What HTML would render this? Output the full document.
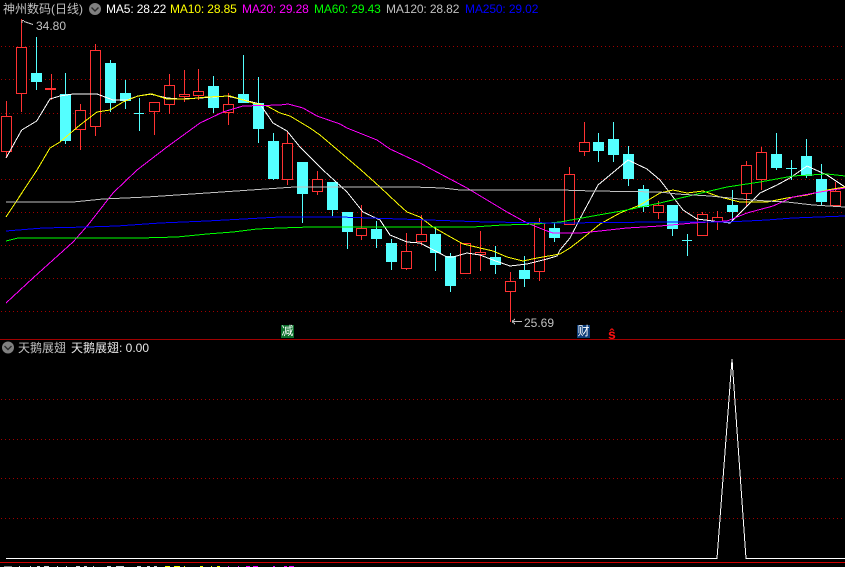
<!DOCTYPE html>
<html><head><meta charset="utf-8"><style>
html,body{margin:0;padding:0;background:#000}
#r{position:relative;width:845px;height:567px;overflow:hidden;background:#000;font:12px/14px "Liberation Sans","WenQuanYi Zen Hei","Noto Sans CJK SC",sans-serif}
#r svg{position:absolute;left:0;top:0}
.t{position:absolute;white-space:pre;color:#c0c0c0}
.b{position:absolute;width:13px;height:13px;line-height:13px;text-align:center;color:#fff;font-size:12px}
</style></head><body><div id="r">
<svg width="845" height="567" viewBox="0 0 845 567" shape-rendering="crispEdges" fill="none">
<path stroke="#a00000" stroke-dasharray="1 3" d="M1 46.5H845M1 79.5H845M1 113.5H845M1 146.5H845M1 179.5H845M1 212.5H845M1 245.5H845M1 278.5H845M1 311.5H845M1 399.5H845M1 439.5H845M1 478.5H845M1 518.5H845"/>
<path stroke="#54ffff" d="M36.5 37V90M65.5 73V144M110.5 60V112M125.5 80V109M213.5 76V113M243.5 55V103M258.5 77V143M273.5 133V180M302.5 162V223M332.5 182V216M347.5 212V249M376.5 221V248M391.5 239V270M435.5 227V271M450.5 253V292M495.5 246V274M524.5 256V287M554.5 223V242M598.5 133V162M613.5 122V162M628.5 146V186M643.5 185V212M672.5 205V236M732.5 190V220M776.5 133V170M806.5 139V178M821.5 164V206M139.5 98V131M134 113.5H144M687.5 234V256M682 240.5H692M791.5 160V180M786 168.5H797"/>
<g fill="#54ffff">
<rect x="31" y="73" width="11" height="9"/><rect x="60" y="94" width="11" height="47"/><rect x="105" y="63" width="11" height="40"/><rect x="120" y="93" width="11" height="8"/><rect x="208" y="86" width="11" height="22"/><rect x="238" y="94" width="11" height="9"/><rect x="253" y="103" width="11" height="26"/><rect x="268" y="141" width="11" height="38"/><rect x="297" y="162" width="11" height="32"/><rect x="327" y="182" width="11" height="28"/><rect x="342" y="212" width="11" height="20"/><rect x="371" y="229" width="11" height="10"/><rect x="386" y="243" width="11" height="19"/><rect x="430" y="234" width="11" height="19"/><rect x="445" y="256" width="11" height="30"/><rect x="490" y="257" width="11" height="8"/><rect x="519" y="270" width="11" height="9"/><rect x="549" y="228" width="11" height="10"/><rect x="593" y="142" width="11" height="9"/><rect x="608" y="139" width="11" height="16"/><rect x="623" y="154" width="11" height="25"/><rect x="638" y="189" width="11" height="18"/><rect x="667" y="205" width="11" height="24"/><rect x="727" y="205" width="11" height="7"/><rect x="771" y="154" width="11" height="14"/><rect x="801" y="156" width="11" height="20"/><rect x="816" y="179" width="11" height="23"/>
</g>
<path stroke="#ff3232" d="M6.5 101V158M21.5 19V112M51.5 74V100M80.5 104V150M95.5 44V136M154.5 102V135M169.5 74V114M184.5 70V102M198.5 69V100M228.5 93V125M287.5 132V185M317.5 171V195M361.5 205V240M406.5 233V270M421.5 215V245M465.5 243V274M480.5 231V271M510.5 272V322M539.5 218V281M569.5 167V225M584.5 122V156M658.5 201V219M702.5 212V236M717.5 211V230M746.5 161V206M761.5 147V190M835.5 182V206"/>
<rect x="45" y="88" width="11" height="2" fill="#ff3232"/>
<g fill="#000" stroke="#ff3232">
<rect x="1.5" y="116.5" width="10" height="35"/><rect x="16.5" y="47.5" width="10" height="46"/><rect x="75.5" y="110.5" width="10" height="19"/><rect x="90.5" y="50.5" width="10" height="76"/><rect x="149.5" y="102.5" width="10" height="9"/><rect x="164.5" y="85.5" width="10" height="19"/><rect x="179.5" y="94.5" width="10" height="2"/><rect x="193.5" y="91.5" width="10" height="4"/><rect x="223.5" y="104.5" width="10" height="8"/><rect x="282.5" y="143.5" width="10" height="36"/><rect x="312.5" y="179.5" width="10" height="12"/><rect x="356.5" y="228.5" width="10" height="7"/><rect x="401.5" y="251.5" width="10" height="17"/><rect x="416.5" y="234.5" width="10" height="7"/><rect x="460.5" y="243.5" width="10" height="30"/><rect x="475.5" y="252.5" width="10" height="2"/><rect x="505.5" y="281.5" width="10" height="10"/><rect x="534.5" y="223.5" width="10" height="48"/><rect x="564.5" y="174.5" width="10" height="50"/><rect x="579.5" y="142.5" width="10" height="9"/><rect x="653.5" y="205.5" width="10" height="7"/><rect x="697.5" y="214.5" width="10" height="21"/><rect x="712.5" y="217.5" width="10" height="4"/><rect x="741.5" y="165.5" width="10" height="28"/><rect x="756.5" y="152.5" width="10" height="27"/><rect x="830.5" y="191.5" width="10" height="14"/>
</g>
<polyline stroke="#fff" points="6,158 21.7,130 36.7,121 50,99 60,96 73,94 97,94 113,100 127,100 138,96 150,94 167,98 180,99 200,98 227,96 240,99 260,104 273,123 280,127 287,131 300,147 323,170 347,192 363,212 380,220 390,235 407,242 420,243 447,257 453,257 467,253 480,255 493,260 510,266 527,264 547,259 557,256 560,250 570,238 583,213 598,185 610,175 628,160 647,169 660,180 683,210 697,219 713,221 730,223 740,213 760,193 777,185 790,178 807,166 827,175 845,187"/>
<polyline stroke="#ffff00" points="6,217 37,170 50,148 60,142 80,125 97,112 110,110 123,102 138,96 152,94 167,99 187,99 207,97 230,96 253,103 267,106 280,113 290,116 310,128 320,135 340,152 361,170 380,187 397,203 407,212 420,217 433,227 447,235 463,244 480,248 493,251 507,257 523,261 537,258 560,254 570,248 583,238 600,224 620,213 640,205 660,193 673,190 687,193 703,191 720,197 740,202 767,202 787,198 807,195 827,190 845,187"/>
<polyline stroke="#ff00ff" points="6,303 33,278 53,260 73,242 88,225 113,193 137,170 167,147 200,123 223,112 243,106 280,105 288,104 303,108 317,116 340,124 347,128 377,140 390,149 420,163 433,170 467,188 507,212 527,223 547,231 553,233 580,233 600,231 627,228 660,226 693,223 727,221 747,213 773,206 793,197 820,192 845,188"/>
<polyline stroke="#00ff00" points="6,241 18,238 87,238 133,238 140,238 177,237 207,234 233,232 257,229 280,228 310,227 327,227 413,227 433,227 443,227 473,227 503,225 537,224 560,222 593,216 627,210 660,203 693,195 727,187 760,182 793,176 827,174 845,176"/>
<polyline stroke="#c0c0c0" points="6,202 43,202 73,202 103,199 147,197 207,193 280,188 295,187 413,187 443,188 460,190 560,190 593,191 660,192 677,194 710,196 740,199 767,201 787,202 813,205 845,207"/>
<polyline stroke="#0000ff" points="6,231 43,228 87,227 117,226 160,223 207,221 280,217 340,217 400,219 457,221 487,222 560,223 660,222 727,222 767,220 793,218 845,216"/>
<path stroke="#c0c0c0" d="M22 20.5H24M22 20.5V23M24 21.5L33 24.5"/>
<path stroke="#c0c0c0" d="M512 321.5H522M512 321.5L515 319M512 321.5L515 324"/>
<rect x="0" y="339" width="845" height="1" fill="#a00000"/>
<polyline stroke="#fff" stroke-width="1" points="6,558.5 717,558.5 732,359 746,558.5 845,558.5"/>
<rect x="0" y="562" width="845" height="1" fill="#d00000"/>
<path stroke="#d8d8d8" d="M19 566.5h1M30 566.5h1M37 566.5h3M44 566.5h5M57 566.5h1M66 566.5h1M76 566.5h4M84 566.5h3M93 566.5h1M107 566.5h4M116 566.5h8M137 566.5h4M147 566.5h3M154 566.5h3"/>
<path stroke="#808080" d="M4 566.5h8"/>
<path stroke="#ffff00" d="M165 566.5h5M174 566.5h6M184 566.5h1M200 566.5h3M211 566.5h1M217 566.5h3"/>
<path stroke="#ff00ff" d="M228 566.5h1M238 566.5h1M246 566.5h4M253 566.5h5M273 566.5h2M284 566.5h3M289 566.5h5"/>
</svg>
<svg width="845" height="567" viewBox="0 0 845 567" fill="none">
<circle cx="95" cy="9" r="6" fill="#808080"/><path d="M91.5 7.5L95 11L98.5 7.5" stroke="#2a2a2a" stroke-width="1.4"/>
<circle cx="8" cy="347.5" r="6" fill="#808080"/><path d="M4.5 346L8 349.5L11.5 346" stroke="#2a2a2a" stroke-width="1.4"/>
</svg>
<div class="t" style="left:3px;top:2px">神州数码(日线)</div>
<div class="t" style="left:106px;top:2px;color:#fff;letter-spacing:-.12px">MA5: 28.22</div>
<div class="t" style="left:170px;top:2px;color:#ff0;letter-spacing:-.12px">MA10: 28.85</div>
<div class="t" style="left:242px;top:2px;color:#f0f;letter-spacing:-.12px">MA20: 29.28</div>
<div class="t" style="left:314px;top:2px;color:#0f0;letter-spacing:-.12px">MA60: 29.43</div>
<div class="t" style="left:386px;top:2px;letter-spacing:-.12px">MA120: 28.82</div>
<div class="t" style="left:465px;top:2px;color:#00f;letter-spacing:-.12px">MA250: 29.02</div>
<div class="t" style="left:36px;top:19px">34.80</div>
<div class="t" style="left:524px;top:316px">25.69</div>
<div class="b" style="left:281px;top:325px;background:#0b6e2a">减</div>
<div class="b" style="left:577px;top:325px;background:#0c3c78">财</div>
<div class="t" style="left:608px;top:327px;color:#ff1010;font-weight:bold;font-size:14px">ŝ</div>
<div class="t" style="left:18px;top:341px">天鹅展翅</div>
<div class="t" style="left:71px;top:341px;color:#e8e8e8">天鹅展翅: 0.00</div>
</div></body></html>
